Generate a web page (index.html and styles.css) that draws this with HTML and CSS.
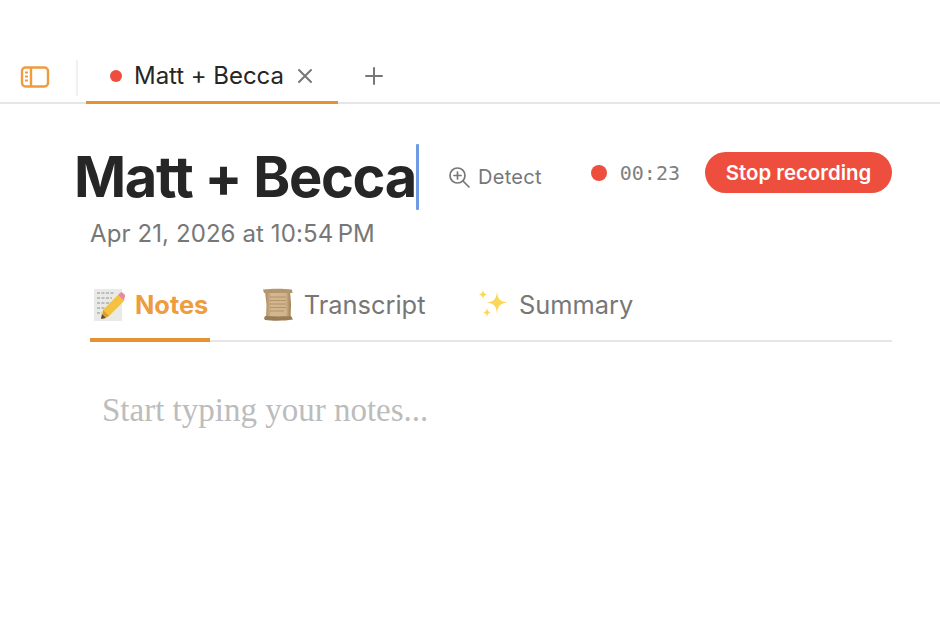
FILE: index.html
```html
<!DOCTYPE html>
<html lang="en">
<head>
  <meta charset="UTF-8" />
  <meta name="viewport" content="width=device-width, initial-scale=1.0"/>
  <title>Matt + Becca</title>
  <link rel="stylesheet" href="styles.css">
</head>
<body>
  <div class="tab-bar">
    <button class="sidebar-btn" aria-label="Toggle sidebar">
      <svg width="30" height="24" viewBox="0 0 30 24" fill="none" stroke="#ee9c3d" stroke-width="2.400">
        <rect x="2" y="2.500" width="26" height="19" rx="3.500"/>
        <path d="M11 2.500v19"/>
        <path d="M5 7.500h3M5 11.500h3M5 15.500h3" stroke-width="1.800"/>
      </svg>
    </button>
    <div class="tab-divider"></div>
    <div class="tab">
      <span class="tab-dot"></span>
      <span class="tab-name">Matt + Becca</span>
      <svg class="tab-close" width="16" height="16" viewBox="0 0 16 16" stroke="#777" stroke-width="2" stroke-linecap="round">
        <path d="M2 2l12 12M14 2L2 14"/>
      </svg>
    </div>
    <svg class="tab-add" width="20" height="20" viewBox="0 0 20 20" stroke="#777" stroke-width="2" stroke-linecap="round">
      <path d="M10 2v16M2 10h16"/>
    </svg>
  </div>

  <div class="note">
    <div class="note-head">
      <h1 class="note-title">Matt + Becca</h1>
      <span class="caret"></span>
      <div class="detect">
        <svg width="23" height="23" viewBox="0 0 23 23" fill="none" stroke="#777" stroke-width="1.700" stroke-linecap="round">
          <circle cx="9.500" cy="9.500" r="7.500"/>
          <path d="M15 15l6 6"/>
          <path d="M9.500 6v7M6 9.500h7"/>
        </svg>
        <span>Detect</span>
      </div>
      <div class="rec">
        <span class="rec-dot"></span>
        <span class="rec-time">00:23</span>
        <button class="stop-btn">Stop recording</button>
      </div>
    </div>
    <div class="note-date">Apr 21, 2026 at 10:54&#8201;PM</div>

    <div class="note-tabs">
      <div class="note-tab active">
        <svg class="emoji" width="32" height="33" viewBox="0 0 32 33">
          <rect x="1" y="1" width="28" height="32" fill="#e9e9e6"/>
          <path d="M4 5h18M4 10h15M4 15h14M4 20h8M4 25h5" stroke="#778" stroke-width=".8" stroke-dasharray="3 1.500"/>
          <path d="M8 31l2-9L25 7l6 6-15 15z" fill="#f4c23c"/>
          <path d="M10 22l6 6-3 1.500-3-3z" fill="#e09a2a"/>
          <path d="M8 31l1-5 4 4z" fill="#5b4a3a"/>
          <path d="M25 7l2-2c1-1 2-1 3 0l1.500 1.500c1 1 1 2 0 3L31 13z" fill="#e98a9a"/>
        </svg>
        <span>Notes</span>
      </div>
      <div class="note-tab">
        <svg class="emoji" width="32" height="33" viewBox="0 0 32 33">
          <defs>
            <linearGradient id="paper" x1="0" x2="1" y1="0" y2="0">
              <stop offset="0" stop-color="#a98a5f"/>
              <stop offset=".25" stop-color="#d3b78f"/>
              <stop offset=".8" stop-color="#d1b48b"/>
              <stop offset="1" stop-color="#9c7d55"/>
            </linearGradient>
          </defs>
          <path d="M3 3h25l1 13-.5 15H4l.5-14z" fill="url(#paper)"/>
          <path d="M8 9h16M8 12.500h16M8 16h16M8 19.500h16M8 23h14" stroke="#a98c66" stroke-width=".8"/>
          <path d="M1 1.500c9-1 20-1 29 0l.5 3.500H2z" fill="#b4966c"/>
          <path d="M3 28c9 .5 19 .5 26 0l2 3.500c-9 1.500-20 1.500-28 .5l-1-1.500z" fill="#9a7c54"/>
        </svg>
        <span>Transcript</span>
      </div>
      <div class="note-tab">
        <svg class="emoji" width="32" height="33" viewBox="0 0 32 33" fill="#fbd85a">
          <path d="M20 3c.5 7 2 10.500 10.500 11.500-8.500 1-10 4.500-10.500 12-.5-7.500-2-11-10.500-12C18 13.500 19.500 10 20 3z"/>
          <path d="M6 1c.3 3.500 1 4.500 4 5.500-3 1-3.700 2-4 5.500-.3-3.500-1-4.500-4-5.500 3-1 3.700-2 4-5.500z"/>
          <path d="M10 19c.3 3.500 1 4.500 3.500 5.500-2.500 1-3.200 2-3.500 5.500-.3-3.500-1-4.500-3.500-5.500 2.500-1 3.200-2 3.500-5.500z"/>
        </svg>
        <span>Summary</span>
      </div>
    </div>

    <div class="note-body">Start typing your notes...</div>
  </div>
</body>
</html>
```

FILE: styles.css
```css
body {
  font-family: Inter, "Liberation Sans", sans-serif;
  margin: 0;
  background-color: #ffffff;
  color: #262626;
}

button {
  font-family: inherit;
  border: none;
  background: none;
  padding: 0;
}

.tab-bar {
  display: flex;
  align-items: center;
  height: 46px;
  margin-top: 56px;
  border-bottom: 2px solid #e6e6e6;
}

.sidebar-btn {
  display: flex;
  margin-left: 20px;
  margin-bottom: 4px;
}

.tab-divider {
  width: 2px;
  height: 36px;
  margin-left: 26px;
  margin-bottom: 2px;
  background-color: #f0f0f0;
}

.tab {
  display: flex;
  align-items: center;
  align-self: stretch;
  width: 252px;
  box-sizing: border-box;
  margin-left: 8px;
  margin-bottom: -2px;
  padding: 0 0 6px 24px;
  border-bottom: 3px solid #e59332;
}

.tab-dot {
  width: 12px;
  height: 12px;
  border-radius: 50%;
  background-color: #ee4e3e;
}

.tab-name {
  margin-left: 12px;
  font-size: 24px;
  letter-spacing: -.05px;
}

.tab-close {
  margin-left: 13px;
}

.tab-add {
  margin-left: 26px;
  margin-bottom: 6px;
}

.note {
  padding: 0 48px 0 90px;
}

.note-head {
  display: flex;
  align-items: center;
  height: 66px;
  margin-top: 40px;
  margin-left: -16px;
}

.note-title {
  margin: 0;
  font-size: 56px;
  font-weight: 700;
  letter-spacing: -1.300px;
  line-height: 66px;
  white-space: nowrap;
  color: #262626;
}

.caret {
  width: 3px;
  height: 66px;
  background-color: #6f9be4;
  border-radius: 1px;
}

.detect {
  display: flex;
  align-items: center;
  gap: 7px;
  margin-left: 29px;
  font-size: 20px;
  letter-spacing: .3px;
  color: #777;
}

.rec {
  display: flex;
  align-items: center;
  margin-left: auto;
  margin-bottom: 8px;
}

.rec-dot {
  width: 16px;
  height: 16px;
  border-radius: 50%;
  background-color: #ee4e3e;
}

.rec-time {
  margin-left: 13px;
  font-family: "DejaVu Sans Mono", monospace;
  font-size: 20px;
  color: #808080;
}

.stop-btn {
  width: 187px;
  height: 41px;
  margin-left: 25px;
  margin-bottom: 2px;
  border-radius: 21px;
  background-color: #ee4e3e;
  color: #fff;
  font-size: 20.400px;
  font-weight: 600;
}

.note-date {
  margin-top: 9px;
  font-size: 24px;
  letter-spacing: .1px;
  line-height: 30px;
  color: #777;
}

.note-tabs {
  display: flex;
  gap: 48.500px;
  margin-top: 31px;
  border-bottom: 2px solid #e6e6e6;
}

.note-tab {
  display: flex;
  align-items: center;
  gap: 10px;
  height: 62px;
  margin-bottom: -2px;
  box-sizing: border-box;
  padding: 0 0 14px 3px;
  font-size: 25.400px;
  color: #777;
}

.note-tab.active {
  border-bottom: 4px solid #e59332;
  padding: 0 2px 10px 3px;
  font-weight: 700;
  color: #ee9c3d;
}

.note-body {
  margin-top: 50px;
  padding-left: 12px;
  font-family: "Liberation Serif", serif;
  font-size: 33px;
  color: #bcbcbc;
}
```
